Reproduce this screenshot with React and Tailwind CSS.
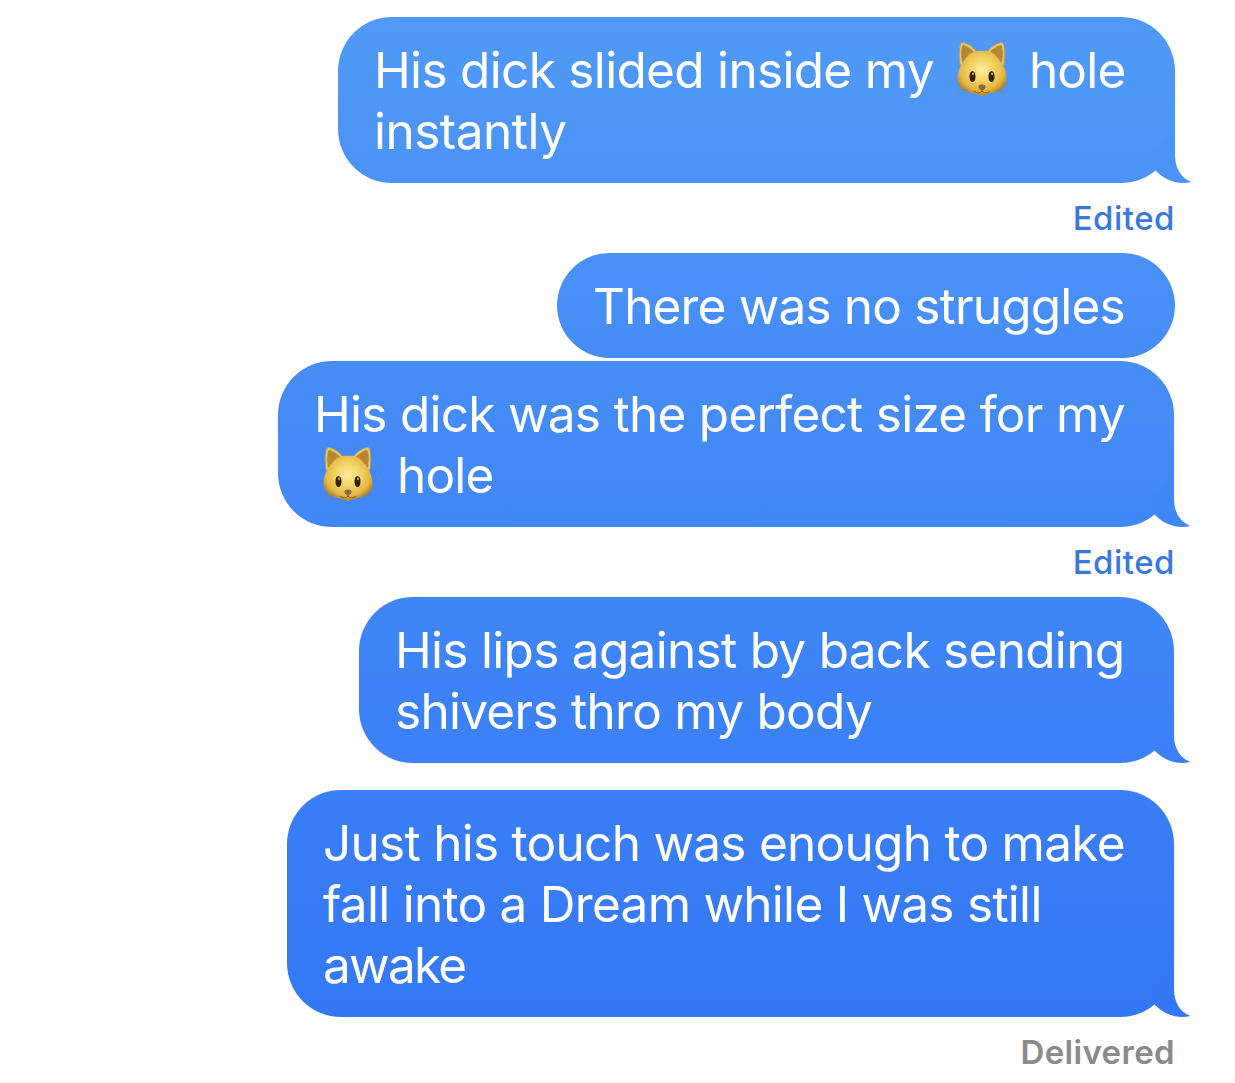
function Cat({ id, className = "" }) {
  return (
    <svg viewBox="0 0 54 58" role="img" aria-label="cat face" className={`mb-[2px] inline-block h-[58px] w-[54px] shrink-0 ${className}`}>
      <defs>
        <radialGradient id={id} cx="50%" cy="42%" r="60%">
          <stop offset="0" stopColor="#ffed9c" />
          <stop offset="0.35" stopColor="#f6d96c" />
          <stop offset="0.75" stopColor="#e4b843" />
          <stop offset="1" stopColor="#a87a2a" />
        </radialGradient>
      </defs>
      <path d="M5 25C3.500 14 4.500 5 6 3C8 1 17 5 22 12L12 26ZM49 25C50.500 14 49.500 5 48 3C46 1 37 5 32 12L42 26Z" fill="#dfc770" stroke="#b99b4e" strokeWidth="0.8" />
      <path d="M7 22C5.500 13 6.500 7 8 5C12 6 17 9 20 13L11 24ZM47 22C48.500 13 47.500 7 46 5C42 6 37 9 34 13L43 24Z" fill="#b98732" />
      <path d="M27 11C34 10 39 13 43 18C48 24 51.500 31 51.500 38C51.500 47 46 52 37 53C33 53 30 56 27 56C24 56 21 53 17 53C8 52 2.500 47 2.500 38C2.500 31 6 24 11 18C15 13 20 10 27 11Z" fill={`url(#${id})`} />
      <path d="M13 50C9 49 5 50 3 52M14 52C10 51 7 52 4 55M41 50C45 49 49 50 51 52M40 52C44 51 47 52 50 55" fill="none" stroke="#65809b" strokeOpacity="0.65" strokeWidth="0.8" />
      <ellipse cx="17.500" cy="36.500" rx="3" ry="5.500" fill="#30220d" />
      <ellipse cx="36.500" cy="36.500" rx="3" ry="5.500" fill="#30220d" />
      <ellipse cx="18" cy="33.800" rx="1" ry="1.500" fill="#bda574" />
      <ellipse cx="37" cy="33.800" rx="1" ry="1.500" fill="#bda574" />
      <path d="M23.500 46C24 44 30 44 30.500 46C31 48 29 50.500 27 50.500C25 50.500 23 48 23.500 46Z" fill="#8d6a48" />
      <path d="M27 49V51C25 54 21 53 19 51M27 51C29 54 33 53 35 51" fill="none" stroke="#8c641e" strokeWidth="1" />
    </svg>
  );
}

function Bubble({ children, tail, className }) {
  return (
    <div className={`relative shrink-0 rounded-[54px] bg-linear-to-b py-[22px] pl-[36px] text-[49.5px] leading-[61px] text-white ${className}`}>
      {children}
      {tail && (
        <svg viewBox="0 0 50 60" className={`absolute -right-[17px] bottom-0 h-[60px] w-[50px] ${tail}`} fill="currentColor">
          <path d="M33 6V32C33 45 39 55 49.500 59C37 62 24 58 14 48L12 30Z" />
        </svg>
      )}
    </div>
  );
}

function Line({ children }) {
  return <div className="flex h-[61px] items-center whitespace-pre">{children}</div>;
}

function Text({ children, className = "tracking-[-0.72px]" }) {
  return <span className={`pt-[2px] ${className}`}>{children}</span>;
}

function Status({ children, className = "font-medium tracking-[0.5px] text-[#3b78de]" }) {
  return <div className={`flex h-[70px] shrink-0 items-center pt-px text-[33px] ${className}`}>{children}</div>;
}

export default function App() {
  return (
    <main className="flex h-[1083px] w-[1235px] flex-col items-end overflow-hidden bg-white pt-[17px] pr-[60px] font-['Inter',sans-serif]">
      <Bubble className="w-[837px] from-[#509af5] to-[#4b93f6]" tail="text-[#4b93f6]">
        <Line><Text className="tracking-[-0.68px]">His dick slided inside my</Text><Cat id="cat-one" className="ml-[21px] mr-[20px]" /><Text className="tracking-[-0.8px]">hole</Text></Line>
        <Line><Text className="tracking-[-0.5px]">instantly</Text></Line>
      </Bubble>
      <Status>Edited</Status>
      <Bubble className="w-[618px] from-[#4991f7] to-[#468df6]">
        <Line><Text className="tracking-[-0.82px]">There was no struggles</Text></Line>
      </Bubble>
      <Bubble className="mt-[3px] mr-px w-[896px] from-[#468df6] to-[#4188f7]" tail="text-[#4188f7]">
        <Line><Text>His dick was the perfect size for my</Text></Line>
        <Line><Cat id="cat-two" className="ml-[7px] mr-[22px]" /><Text className="tracking-[-0.8px]">hole</Text></Line>
      </Bubble>
      <Status>Edited</Status>
      <Bubble className="mr-px w-[815px] from-[#3f86f6] to-[#3b80f7]" tail="text-[#3b80f7]">
        <Line><Text className="tracking-[-0.7px]">His lips against by back sending</Text></Line>
        <Line><Text>shivers thro my body</Text></Line>
      </Bubble>
      <Bubble className="mt-[27px] mr-px w-[887px] from-[#3a7ff6] to-[#3478f5]" tail="text-[#3478f5]">
        <Line><Text>Just his touch was enough to make</Text></Line>
        <Line><Text>fall into a Dream while I was still</Text></Line>
        <Line><Text className="tracking-[-1.7px]">awake</Text></Line>
      </Bubble>
      <Status className="font-semibold tracking-[0.35px] text-[#8a8a8e]">Delivered</Status>
    </main>
  );
}
